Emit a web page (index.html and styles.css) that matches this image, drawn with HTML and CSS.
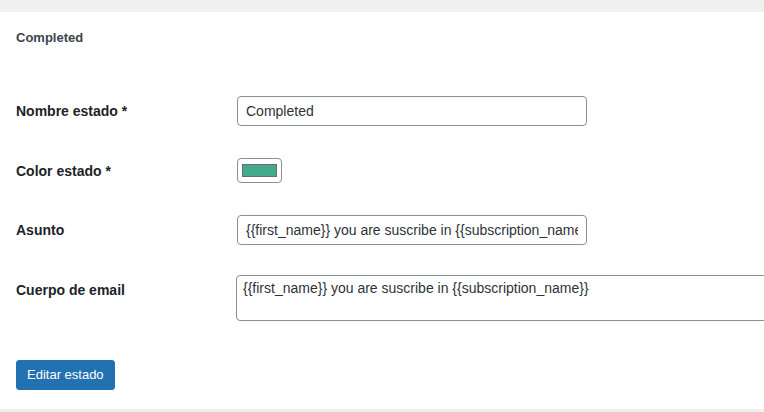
FILE: index.html
```html
<!DOCTYPE html>
<html lang="es">
<head>
<meta charset="utf-8">
<title>Editar estado</title>
<link rel="stylesheet" href="styles.css">
</head>
<body>
<div class="card">
  <h2 class="title">Completed</h2>
  <form class="form">
    <div class="row row-1">
      <label class="label" for="nombre">Nombre estado *</label>
      <div class="field"><input id="nombre" class="text-input" type="text" value="Completed"></div>
    </div>
    <div class="row row-2">
      <label class="label" for="color">Color estado *</label>
      <div class="field"><input id="color" class="color-input" type="color" value="#43aa8b"></div>
    </div>
    <div class="row row-3">
      <label class="label" for="asunto">Asunto</label>
      <div class="field"><input id="asunto" class="text-input" type="text" value="{{first_name}} you are suscribe in {{subscription_name}}"></div>
    </div>
    <div class="row row-4">
      <label class="label label-top" for="cuerpo">Cuerpo de email</label>
      <div class="field"><textarea id="cuerpo" class="textarea">{{first_name}} you are suscribe in {{subscription_name}}</textarea></div>
    </div>
    <div class="actions">
      <button type="button" class="button-primary">Editar estado</button>
    </div>
  </form>
</div>
</body>
</html>
```

FILE: styles.css
```css
html, body {
  margin: 0;
  padding: 0;
}
body {
  background: #f0f0f1;
  font-family: "Liberation Sans", Arial, sans-serif;
  color: #1d2327;
  overflow: hidden;
}
.card {
  margin-top: 12px;
  background: #fff;
  padding: 0 16px 19px 16px;
  height: 378px;
  overflow: hidden;
}
.title {
  margin: 0;
  padding-top: 17px;
  font-size: 13px;
  line-height: 18px;
  font-weight: 700;
  color: #3c434a;
}
.form {
  margin-top: 34px;
  display: flex;
  flex-direction: column;
}
.row {
  display: grid;
  grid-template-columns: 221px 1fr;
  align-items: center;
  height: 60px;
}
.row-2 { height: 59px; }
.row-4 {
  align-items: start;
  height: auto;
  padding-top: 15px;
}
.label {
  font-size: 14px;
  line-height: 18px;
  font-weight: 700;
  color: #1d2327;
}
.label-top {
  padding-top: 6px;
}
.field {
  display: flex;
  align-items: center;
}
.text-input {
  box-sizing: border-box;
  width: 350px;
  height: 30px;
  margin: 0;
  padding: 0 8px;
  border: 1px solid #8c8f94;
  border-radius: 4px;
  font-family: "Liberation Sans", Arial, sans-serif;
  font-size: 14px;
  line-height: 28px;
  color: #2c3338;
  background: #fff;
  outline: none;
}
.color-input {
  -webkit-appearance: none;
  appearance: none;
  box-sizing: border-box;
  width: 45px;
  height: 25px;
  margin: 0;
  padding: 0;
  border: 1px solid #8c8f94;
  border-radius: 4px;
  background: #fff;
  cursor: pointer;
}
.color-input::-webkit-color-swatch-wrapper {
  padding: 5px 4px;
}
.color-input::-webkit-color-swatch {
  border: 1px solid #6b6b6b;
  border-radius: 0;
}
.textarea {
  box-sizing: border-box;
  margin: 0 0 0 -1px;
  width: 620px;
  height: 46px;
  padding: 2px 6px;
  border: 1px solid #8c8f94;
  border-radius: 4px;
  font-family: "Liberation Sans", Arial, sans-serif;
  font-size: 14px;
  line-height: 20px;
  color: #2c3338;
  resize: none;
  outline: none;
  overflow: hidden;
}
.actions {
  margin-top: 39px;
}
.button-primary {
  box-sizing: border-box;
  height: 30px;
  margin: 0;
  padding: 0 10px;
  border: 1px solid #2271b1;
  border-radius: 3px;
  background: #2271b1;
  color: #fff;
  font-family: "Liberation Sans", Arial, sans-serif;
  font-size: 13px;
  line-height: 28px;
  cursor: pointer;
}
```
